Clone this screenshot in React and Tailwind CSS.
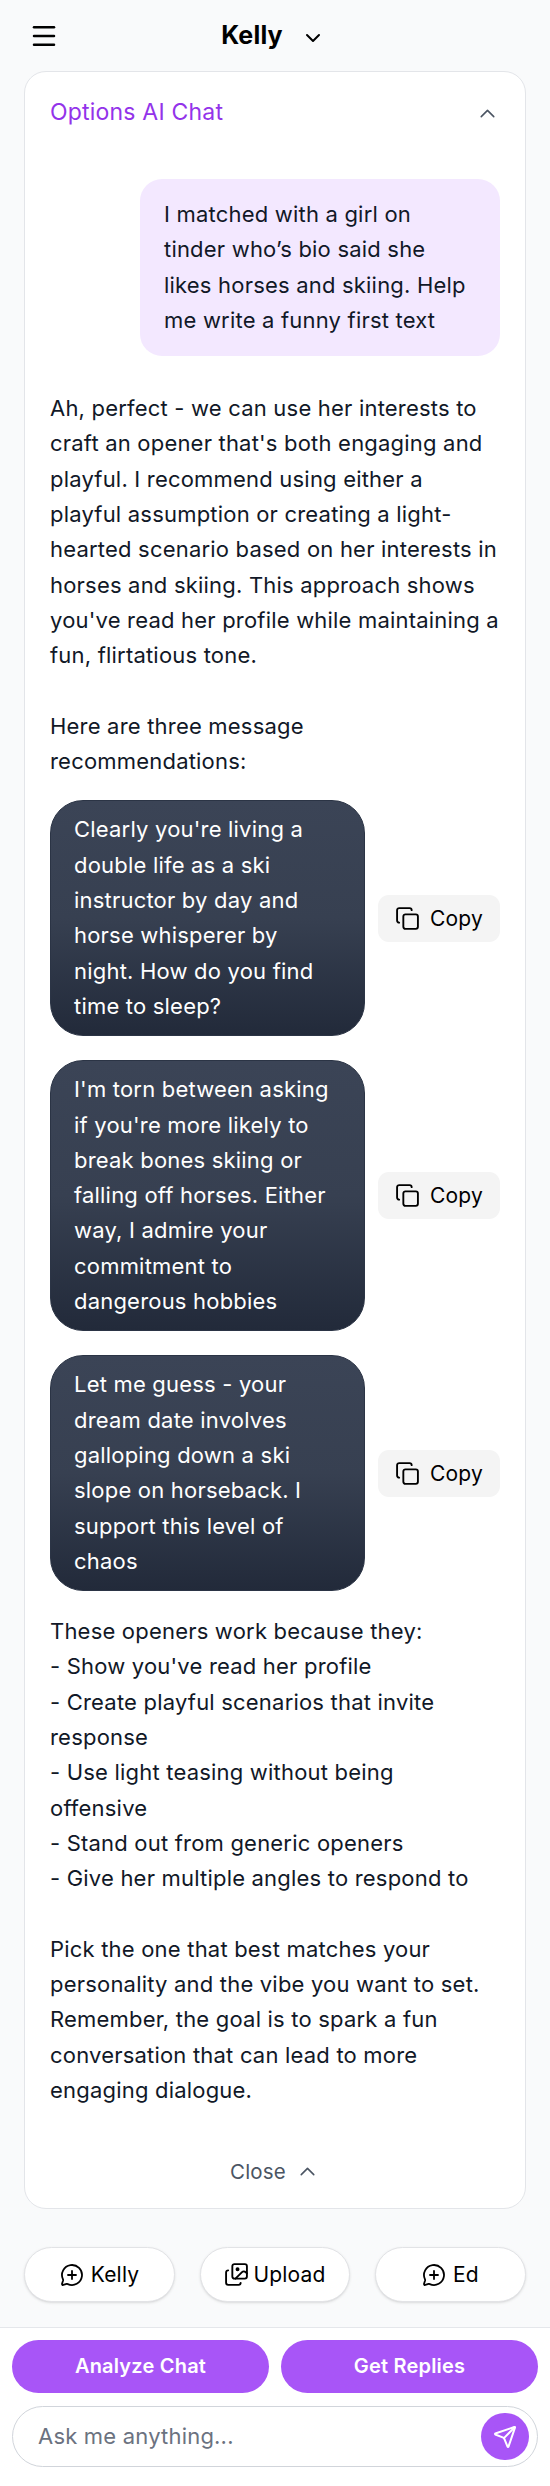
import React from "react";
import { ChevronDown, ChevronUp, Copy, Images, Menu, MessageCirclePlus, Send } from "lucide-react";

const intro = `Ah, perfect - we can use her interests to
craft an opener that's both engaging and
playful. I recommend using either a
playful assumption or creating a light-
hearted scenario based on her interests in
horses and skiing. This approach shows
you've read her profile while maintaining a
fun, flirtatious tone.

Here are three message
recommendations:`;

const outro = `These openers work because they:
- Show you've read her profile
- Create playful scenarios that invite
response
- Use light teasing without being
offensive
- Stand out from generic openers
- Give her multiple angles to respond to

Pick the one that best matches your
personality and the vibe you want to set.
Remember, the goal is to spark a fun
conversation that can lead to more
engaging dialogue.`;

const replies = [
  "Clearly you're living a double life as a ski instructor by day and horse whisperer by night. How do you find time to sleep?",
  "I'm torn between asking if you're more likely to break bones skiing or falling off horses. Either way, I admire your commitment to dangerous hobbies",
  "Let me guess - your dream date involves galloping down a ski slope on horseback. I support this level of chaos",
];

const ReplyRow = ({ text }) => (
  <div className="flex items-center gap-[13px]">
    <div className="w-[315px] shrink-0 rounded-[33px] border border-[#2b3445] bg-gradient-to-b from-[#3b4456] via-[#374051] to-[#222a3a] py-[11px] pl-[23px] pr-6 text-white">
      {text}
    </div>
    <button className="flex h-[47px] w-[122px] items-center justify-center gap-[10px] rounded-[11px] bg-[#f4f4f4] text-[21px] text-black">
      <Copy size={25} strokeWidth={1.8} />
      Copy
    </button>
  </div>
);

const Pill = ({ icon: Icon, size, label, className }) => (
  <button className={`flex h-[55px] items-center justify-center rounded-full border border-[#e2e3e6] bg-white text-[21px] text-black shadow-sm ${className}`}>
    <Icon size={size} strokeWidth={1.8} />
    {label}
  </button>
);

export default function App() {
  return (
    <div className="flex min-h-[2486px] flex-col bg-[#f9fafb] font-['Inter',sans-serif] text-[22px] leading-[35.3px] tracking-[0.2px] text-[#111827]">
      {/* Header */}
      <div className="grid h-[71px] shrink-0 grid-cols-[1fr_auto_1fr] items-center px-[29px]">
        <Menu size={30} strokeWidth={2} className="text-black" />
        <div className="mr-[4px] flex items-center">
          <span className="text-[25px] font-bold text-black">Kelly</span>
          <ChevronDown size={24} strokeWidth={2} className="ml-[18px] mt-[6px] text-black" />
        </div>
      </div>

      {/* Chat card */}
      <div className="mx-6 shrink-0 rounded-[22px] border border-[#e3e5e9] bg-white px-[25px] pb-[22px]">
        <div className="flex h-[82px] items-center justify-between">
          <span className="text-[23px] text-[#9333ea]">Options AI Chat</span>
          <ChevronUp size={25} strokeWidth={1.5} className="text-[#4b5563]" />
        </div>

        <div className="ml-auto mt-[25px] w-[360px] rounded-[22px] bg-[#f3e8ff] px-6 py-[18px]">
          I matched with a girl on tinder who’s bio said she likes horses and skiing. Help me write a funny first text
        </div>

        <div className="mt-[35px] whitespace-pre-line">{intro}</div>

        <div className="mt-[21px] flex flex-col gap-6">
          {replies.map((text) => (
            <ReplyRow key={text} text={text} />
          ))}
        </div>

        <div className="mt-[23px] whitespace-pre-line">{outro}</div>

        <div className="mt-12 flex h-[30px] items-center justify-center gap-[9px] text-[20.5px] text-[#4b5563]">
          Close
          <ChevronUp size={25} strokeWidth={1.5} />
        </div>
      </div>

      {/* Quick actions */}
      <div className="mx-6 mt-[38px] flex shrink-0 justify-between">
        <Pill icon={MessageCirclePlus} size={24} label="Kelly" className="w-[151px] gap-[7px]" />
        <Pill icon={Images} size={25} label="Upload" className="w-[150px] gap-[4px]" />
        <Pill icon={MessageCirclePlus} size={24} label="Ed" className="w-[151px] gap-[7px]" />
      </div>

      {/* Footer */}
      <div className="mt-[25px] flex-1 border-t border-[#e5e7eb] bg-white px-3 pt-3">
        <div className="flex gap-3">
          <button className="h-[53px] flex-1 rounded-full bg-[#a855f7] text-[20px] font-semibold text-white">Analyze Chat</button>
          <button className="h-[53px] flex-1 rounded-full bg-[#a855f7] text-[20px] font-semibold text-white">Get Replies</button>
        </div>
        <div className="mt-[13px] flex h-[61px] items-center justify-between rounded-full border border-[#d1d5db] pl-[25px] pr-2">
          <span className="text-[#6b7280]">Ask me anything...</span>
          <div className="flex h-[47px] w-[48px] items-center justify-center rounded-full bg-[#a855f7]">
            <Send size={24} strokeWidth={2} className="text-white" />
          </div>
        </div>
      </div>
    </div>
  );
}
